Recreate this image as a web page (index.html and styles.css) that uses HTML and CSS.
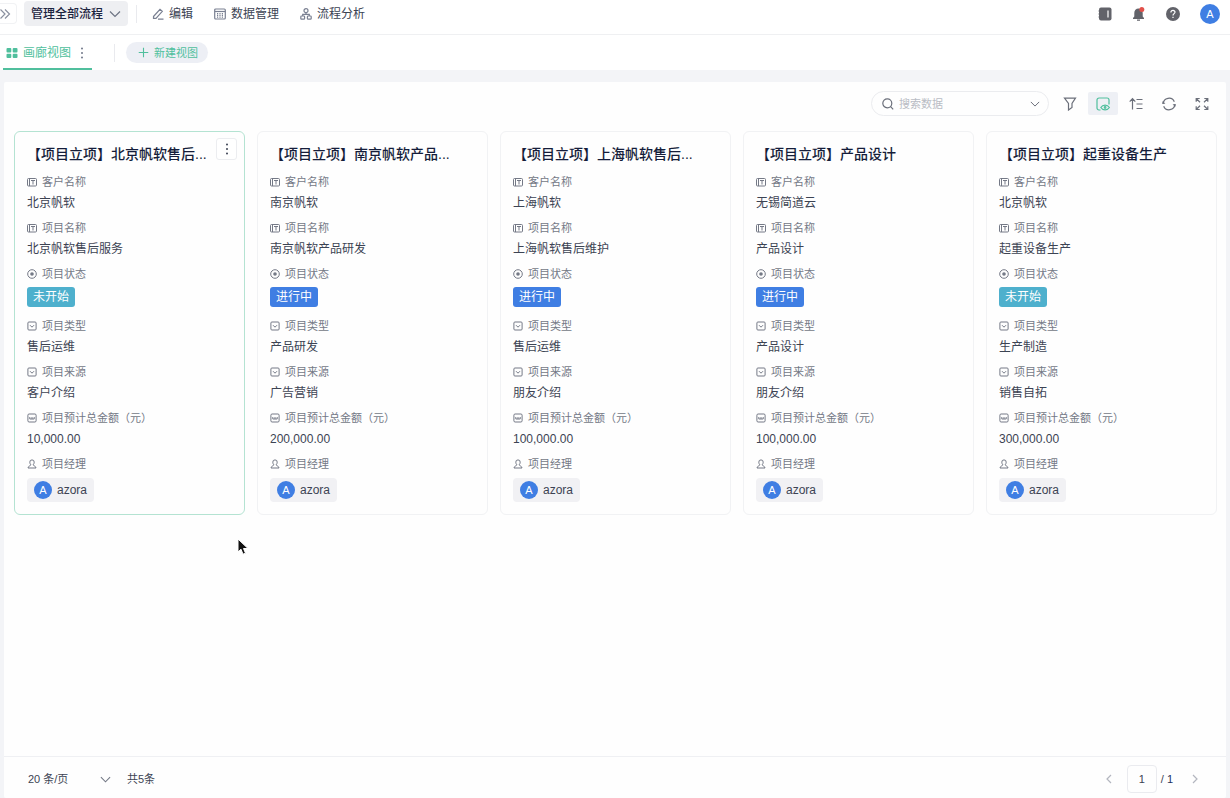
FILE: index.html
```html
<!DOCTYPE html>
<html lang="zh-CN">
<head>
<meta charset="utf-8">
<title>管理全部流程</title>
<link rel="stylesheet" href="styles.css">
</head>
<body>
<svg class="sprite" aria-hidden="true">
  <symbol id="i-text" viewBox="0 0 10 10"><rect x=".5" y="1.500" width="9" height="7.500" rx="1"/><path d="M4 3.500h4M6 3.500v4M2.500 1.500v7.500"/></symbol>
  <symbol id="i-radio" viewBox="0 0 10 10"><circle cx="5" cy="5" r="4.300"/><circle class="solid" cx="5" cy="5" r="1.800"/></symbol>
  <symbol id="i-select" viewBox="0 0 10 10"><rect x=".9" y="1" width="8.200" height="8" rx="1"/><path d="M3 4.200l2 2 2-2"/></symbol>
  <symbol id="i-number" viewBox="0 0 10 10"><rect x=".9" y="1" width="8.200" height="8" rx="1.200"/><path d="M2.800 4v2M5 4v2M7.200 4v2M2.800 6h4.400"/></symbol>
  <symbol id="i-user" viewBox="0 0 10 10"><path d="M5 .9a2.200 2.200 0 0 0-2.200 2.300c0 1.200.5 1.900 1 2.600C3.700 7 1 7 1 9h8c0-2-2.700-2-2.800-3.200.5-.7 1-1.400 1-2.600A2.200 2.200 0 0 0 5 .9z"/></symbol>
  <symbol id="i-down" viewBox="0 0 12 12"><path d="M1 3.500l5 5 5-5"/></symbol>
  <symbol id="i-more" viewBox="0 0 12 12"><circle class="solid" cx="6" cy="1.500" r="1"/><circle class="solid" cx="6" cy="6" r="1"/><circle class="solid" cx="6" cy="10.500" r="1"/></symbol>
</svg>

<header class="topbar">
  <button class="expand" aria-label="展开"><svg class="icon" viewBox="0 0 12 12"><path d="M1.500 1.500L6 6l-4.500 4.500M6 1.500L10.500 6 6 10.500"/></svg></button>
  <button class="scope">管理全部流程<svg class="icon"><use href="#i-down"/></svg></button>
  <span class="rule"></span>
  <nav class="menu">
    <a href="#"><svg class="icon" viewBox="0 0 12 12"><path d="M1.500 8.500L8 1.300l2.300 2L4 10.300H1.500zM6 11.200h5.500"/></svg>编辑</a>
    <a href="#"><svg class="icon" viewBox="0 0 12 12"><rect x=".7" y="1" width="10.600" height="10" rx="1"/><path d="M.7 3.500h10.600"/><path d="M3 5.700h6M3 7.400h6M3 9.100h6" stroke-dasharray="1.200 1.200"/></svg>数据管理</a>
    <a href="#"><svg class="icon" viewBox="0 0 12 12"><circle cx="6" cy="2.700" r="2"/><path d="M6 4.700v1.600M2.700 8V6.300h6.600V8"/><rect x=".8" y="8" width="3.800" height="3.200" rx=".8"/><rect x="7.400" y="8" width="3.800" height="3.200" rx=".8"/></svg>流程分析</a>
  </nav>
  <div class="account">
    <button aria-label="侧栏"><svg class="icon" viewBox="0 0 14 14"><rect class="solid" x="1" y=".5" width="12.500" height="13" rx="2"/><path class="light" d="M10 3.500v7"/><path d="M.5 4H2M.5 7H2M.5 10H2"/></svg></button>
    <button aria-label="通知"><svg class="icon" viewBox="0 0 14 14"><path class="solid" d="M6.500 1.500A4.300 4.300 0 0 0 2.300 6v3.500L1 11v1h11v-1l-1.300-1.500V6a4.300 4.300 0 0 0-4.200-4.500zM5 12.500h3v1.300H5z"/><circle class="alert" cx="9.800" cy="2.500" r="2.500"/></svg></button>
    <button aria-label="帮助"><svg class="icon" viewBox="0 0 14 14"><circle class="solid" cx="7" cy="7" r="7"/><path class="light" d="M4.900 5.400C5 2.700 9.200 2.900 9 5.300 8.900 6.600 7 6.700 7 8.400M7 9.700v1.300"/></svg></button>
    <button class="avatar avatar-large" aria-label="账户">A</button>
  </div>
</header>

<div class="views">
  <button class="view"><svg class="icon" viewBox="0 0 12 12"><g class="solid"><rect x=".5" y="1" width="4.800" height="4.400" rx="1"/><rect x="6.700" y="1" width="4.800" height="4.400" rx="1"/><rect x=".5" y="6.700" width="4.800" height="4.400" rx="1"/><rect x="6.700" y="6.700" width="4.800" height="4.400" rx="1"/></g></svg>画廊视图<svg class="icon dots"><use href="#i-more"/></svg></button>
  <span class="rule"></span>
  <button class="add-view"><svg class="icon" viewBox="0 0 12 12"><path d="M6 .8v10.400M.8 6h10.400"/></svg>新建视图</button>
</div>

<main class="panel">
  <div class="toolbar">
    <label class="search"><svg class="icon" viewBox="0 0 12 12"><circle cx="5.300" cy="5.300" r="4.500"/><path d="M8.600 8.600l2.600 2.800"/></svg><input type="text" placeholder="搜索数据" aria-label="搜索数据"><svg class="icon chevron" viewBox="0 0 12 12"><use href="#i-down"/></svg></label>
    <button aria-label="筛选"><svg class="icon" viewBox="0 0 14 14"><path d="M1.500 1.200h11L9 6.500v4L5.500 13V6.500z"/></svg></button>
    <button class="on" aria-label="显示字段"><svg class="icon" viewBox="0 0 14 14"><path d="M4.500 13H3a2 2 0 0 1-2-2V3a2 2 0 0 1 2-2h8a2 2 0 0 1 2 2v4.500"/><path d="M4.800 10.500c2-3.200 6.600-3.200 8.600 0-2 3.200-6.600 3.200-8.600 0z"/><circle cx="9.100" cy="10.500" r=".8"/></svg></button>
    <button aria-label="排序"><svg class="icon" viewBox="0 0 14 14"><path d="M3.500 12.500V2M.7 4.700l2.800-3 2.800 3M7.500 2.500h6M7.500 7h6M7.500 11.500h6"/></svg></button>
    <button aria-label="刷新"><svg class="icon" viewBox="0 0 14 14"><path d="M1.300 6.800A5.700 5.700 0 0 1 12.300 4.800M12.700 7.200A5.700 5.700 0 0 1 1.700 9.200"/><path class="solid" d="M10.600 7.200h3.400L13.200 10zM0 6.800h3.400L.8 4z"/></svg></button>
    <button aria-label="全屏"><svg class="icon" viewBox="0 0 14 14"><path d="M1.200 4.800V1.500h3.500M1.200 1.500L5 5.200M9.300 1.500h3.500v3.300M12.800 1.500L9 5.200M1.200 9.200v3.300h3.500M1.200 12.500L5 8.800M9.300 12.500h3.500V9.200M12.800 12.500L9 8.800"/></svg></button>
  </div>

  <section class="gallery">
    <article class="card active">
      <button class="card-more" aria-label="更多"><svg class="icon"><use href="#i-more"/></svg></button>
      <h2>【项目立项】北京帆软售后...</h2>
      <dl>
        <dt><svg class="icon"><use href="#i-text"/></svg>客户名称</dt><dd>北京帆软</dd>
        <dt><svg class="icon"><use href="#i-text"/></svg>项目名称</dt><dd>北京帆软售后服务</dd>
        <dt><svg class="icon"><use href="#i-radio"/></svg>项目状态</dt><dd class="status"><span class="tag idle">未开始</span></dd>
        <dt><svg class="icon"><use href="#i-select"/></svg>项目类型</dt><dd>售后运维</dd>
        <dt><svg class="icon"><use href="#i-select"/></svg>项目来源</dt><dd>客户介绍</dd>
        <dt><svg class="icon"><use href="#i-number"/></svg>项目预计总金额（元）</dt><dd>10,000.00</dd>
        <dt><svg class="icon"><use href="#i-user"/></svg>项目经理</dt><dd class="member"><span class="chip"><span class="avatar">A</span>azora</span></dd>
      </dl>
    </article>
    <article class="card">
      <h2>【项目立项】南京帆软产品...</h2>
      <dl>
        <dt><svg class="icon"><use href="#i-text"/></svg>客户名称</dt><dd>南京帆软</dd>
        <dt><svg class="icon"><use href="#i-text"/></svg>项目名称</dt><dd>南京帆软产品研发</dd>
        <dt><svg class="icon"><use href="#i-radio"/></svg>项目状态</dt><dd class="status"><span class="tag">进行中</span></dd>
        <dt><svg class="icon"><use href="#i-select"/></svg>项目类型</dt><dd>产品研发</dd>
        <dt><svg class="icon"><use href="#i-select"/></svg>项目来源</dt><dd>广告营销</dd>
        <dt><svg class="icon"><use href="#i-number"/></svg>项目预计总金额（元）</dt><dd>200,000.00</dd>
        <dt><svg class="icon"><use href="#i-user"/></svg>项目经理</dt><dd class="member"><span class="chip"><span class="avatar">A</span>azora</span></dd>
      </dl>
    </article>
    <article class="card">
      <h2>【项目立项】上海帆软售后...</h2>
      <dl>
        <dt><svg class="icon"><use href="#i-text"/></svg>客户名称</dt><dd>上海帆软</dd>
        <dt><svg class="icon"><use href="#i-text"/></svg>项目名称</dt><dd>上海帆软售后维护</dd>
        <dt><svg class="icon"><use href="#i-radio"/></svg>项目状态</dt><dd class="status"><span class="tag">进行中</span></dd>
        <dt><svg class="icon"><use href="#i-select"/></svg>项目类型</dt><dd>售后运维</dd>
        <dt><svg class="icon"><use href="#i-select"/></svg>项目来源</dt><dd>朋友介绍</dd>
        <dt><svg class="icon"><use href="#i-number"/></svg>项目预计总金额（元）</dt><dd>100,000.00</dd>
        <dt><svg class="icon"><use href="#i-user"/></svg>项目经理</dt><dd class="member"><span class="chip"><span class="avatar">A</span>azora</span></dd>
      </dl>
    </article>
    <article class="card">
      <h2>【项目立项】产品设计</h2>
      <dl>
        <dt><svg class="icon"><use href="#i-text"/></svg>客户名称</dt><dd>无锡简道云</dd>
        <dt><svg class="icon"><use href="#i-text"/></svg>项目名称</dt><dd>产品设计</dd>
        <dt><svg class="icon"><use href="#i-radio"/></svg>项目状态</dt><dd class="status"><span class="tag">进行中</span></dd>
        <dt><svg class="icon"><use href="#i-select"/></svg>项目类型</dt><dd>产品设计</dd>
        <dt><svg class="icon"><use href="#i-select"/></svg>项目来源</dt><dd>朋友介绍</dd>
        <dt><svg class="icon"><use href="#i-number"/></svg>项目预计总金额（元）</dt><dd>100,000.00</dd>
        <dt><svg class="icon"><use href="#i-user"/></svg>项目经理</dt><dd class="member"><span class="chip"><span class="avatar">A</span>azora</span></dd>
      </dl>
    </article>
    <article class="card">
      <h2>【项目立项】起重设备生产</h2>
      <dl>
        <dt><svg class="icon"><use href="#i-text"/></svg>客户名称</dt><dd>北京帆软</dd>
        <dt><svg class="icon"><use href="#i-text"/></svg>项目名称</dt><dd>起重设备生产</dd>
        <dt><svg class="icon"><use href="#i-radio"/></svg>项目状态</dt><dd class="status"><span class="tag idle">未开始</span></dd>
        <dt><svg class="icon"><use href="#i-select"/></svg>项目类型</dt><dd>生产制造</dd>
        <dt><svg class="icon"><use href="#i-select"/></svg>项目来源</dt><dd>销售自拓</dd>
        <dt><svg class="icon"><use href="#i-number"/></svg>项目预计总金额（元）</dt><dd>300,000.00</dd>
        <dt><svg class="icon"><use href="#i-user"/></svg>项目经理</dt><dd class="member"><span class="chip"><span class="avatar">A</span>azora</span></dd>
      </dl>
    </article>
  </section>

  <footer class="pager">
    <label class="page-size"><select aria-label="每页条数"><option>20 条/页</option></select><svg class="icon" viewBox="0 0 12 12"><use href="#i-down"/></svg></label>
    <span>共5条</span>
    <div class="pages">
      <button aria-label="上一页"><svg class="icon" viewBox="0 0 10 10"><path d="M7 1L3 5l4 4"/></svg></button>
      <input type="text" value="1" aria-label="页码">
      <span class="total">/ <b>1</b></span>
      <button aria-label="下一页"><svg class="icon" viewBox="0 0 10 10"><path d="M3 1l4 4-4 4"/></svg></button>
    </div>
  </footer>
</main>

<svg class="cursor" viewBox="0 0 12 18" aria-hidden="true"><path d="M1 1v13l3-2.800 2 5 2.500-1-2-4.700H11z"/></svg>
</body>
</html>
```

FILE: styles.css
```css
* { box-sizing: border-box; }

body {
  margin: 0;
  min-height: 100vh;
  display: flex;
  flex-direction: column;
  background: #f3f4f7;
  color: #3c4353;
  font: 12px/20px "Liberation Sans", "Noto Sans CJK SC", sans-serif;
}

button, input, select {
  margin: 0;
  padding: 0;
  border: 0;
  background: none;
  color: inherit;
  font: inherit;
}

button { display: flex; align-items: center; justify-content: center; }
a { color: inherit; text-decoration: none; }
.sprite { display: none; }

.icon {
  flex: none;
  width: 12px;
  height: 12px;
  fill: none;
  stroke: currentColor;
  stroke-width: 1.2;
}
.solid { fill: currentColor; stroke: none; }
.light { stroke: #fff; }
.alert { fill: #e2504a; stroke: none; }
.rule { width: 1px; height: 18px; background: #e9eaee; }

/* top bar */
.topbar {
  display: flex;
  align-items: center;
  height: 35px;
  padding: 0 10px 7px 0;
  background: #fff;
  border-bottom: 1px solid #eff0f2;
}
.expand {
  width: 17px;
  height: 21px;
  padding-right: 6px;
  border: 1px solid #f1f2f4;
  border-left: 0;
  border-radius: 0 4px 4px 0;
  color: #8b91a0;
}
.scope {
  gap: 6px;
  height: 25px;
  margin: 0 8px 0 7px;
  padding: 0 7px;
  border-radius: 4px;
  background: #eeeff2;
  color: #1c2440;
  font-weight: 500;
}
.scope .icon { color: #6d7484; }
.menu { display: flex; gap: 21px; margin-left: 15px; }
.menu a { display: flex; align-items: center; gap: 5px; }
.menu .icon { color: #7a8092; }
.account { display: flex; align-items: center; gap: 20px; margin-left: auto; color: #62636a; }
.account .icon { width: 14px; height: 14px; }

.avatar {
  display: flex;
  align-items: center;
  justify-content: center;
  width: 18px;
  height: 18px;
  border-radius: 50%;
  background: #3f7ee3;
  color: #fff;
  font-size: 11px;
}
.avatar-large { width: 20px; height: 20px; }

/* view tabs */
.views {
  display: flex;
  align-items: center;
  height: 35px;
  padding-left: 3px;
  background: #fff;
  color: #50bf9d;
}
.view { gap: 5px; height: 35px; padding: 2px 4px 0 3px; border-bottom: 2px solid #50bf9d; }
.view .dots { color: #707789; }
.views .rule { margin: 0 11px 0 22px; }
.add-view {
  gap: 5px;
  height: 21px;
  padding: 0 10px 0 12px;
  border-radius: 11px;
  background: #edeff5;
  font-size: 11px;
}
.add-view .icon { width: 11px; height: 11px; }

/* gallery panel */
.panel {
  flex: 1;
  display: flex;
  flex-direction: column;
  margin: 12px 4px 0;
  border-radius: 2px;
  background: #fefefe;
}
.toolbar {
  display: flex;
  align-items: center;
  justify-content: flex-end;
  gap: 3px;
  height: 43px;
  padding: 0 9px 0 0;
  color: #6b6f7a;
}
.toolbar button { width: 30px; height: 23px; border-radius: 2px; }
.toolbar button .icon { width: 14px; height: 14px; }
.toolbar .on { background: #eef0f5; color: #50bf9d; }
.search {
  display: flex;
  align-items: center;
  gap: 5px;
  width: 178px;
  height: 25px;
  margin-right: 3px;
  padding: 0 8px 0 10px;
  border: 1px solid #ebecef;
  border-radius: 13px;
}
.search input { flex: 1; min-width: 0; outline: 0; font-size: 11px; }
.search input::placeholder { color: #b9bcc4; opacity: 1; }
.search .chevron { width: 10px; height: 10px; }

.gallery {
  display: grid;
  grid-template-columns: repeat(5, 1fr);
  gap: 12px;
  padding: 6px 9px 12px 10px;
}
.card {
  position: relative;
  min-width: 0;
  padding: 11px 12px 9px;
  border: 1px solid #f1f2f4;
  border-radius: 6px;
}
.card.active { border-color: #b4e3d2; }
.card h2 {
  margin: 0 0 9px;
  overflow: hidden;
  color: #151d3a;
  font-size: 14px;
  font-weight: 500;
  line-height: 22px;
  white-space: nowrap;
}
.card-more {
  position: absolute;
  top: 6px;
  right: 7px;
  width: 21px;
  height: 22px;
  border: 1px solid #ecedf0;
  border-radius: 3px;
  background: #fff;
}
.card dl { margin: 0; }
.card dt {
  display: flex;
  align-items: center;
  gap: 5px;
  height: 16px;
  margin-bottom: 3px;
  color: #747986;
  font-size: 11px;
}
.card dt .icon { width: 10px; height: 10px; stroke-width: 1; }
.card dd { display: flex; align-items: center; height: 20px; margin: 0 0 7px; }
.card .status { height: 26px; padding-bottom: 2px; }
.card .member { height: 30px; margin-bottom: 0; }
.tag {
  height: 20px;
  padding: 0 6px;
  border-radius: 3px;
  background: #3f7ee3;
  color: #fff;
}
.tag.idle { background: #4eb0cd; }
.chip {
  display: flex;
  align-items: center;
  gap: 5px;
  height: 24px;
  padding: 0 7px;
  border-radius: 4px;
  background: #f1f1f4;
}

/* pagination */
.pager {
  display: flex;
  align-items: center;
  gap: 16px;
  height: 42px;
  margin-top: auto;
  padding: 3px 24px 0 24px;
  border-top: 1px solid #eff0f3;
  font-size: 11px;
}
.page-size { display: flex; align-items: center; }
.page-size select { width: 72px; appearance: none; outline: 0; }
.page-size .icon { width: 11px; height: 11px; color: #747986; }
.pages { display: flex; align-items: center; margin-left: auto; }
.pages button { width: 14px; height: 20px; color: #b3b6bf; }
.pages .icon { width: 10px; height: 10px; }
.pages input {
  width: 30px;
  height: 28px;
  margin: 0 4px 0 11px;
  border: 1px solid #eaebef;
  border-radius: 4px;
  text-align: center;
}
.total { margin-right: 15px; }
.total b { color: #22305e; font-weight: 400; }

.cursor {
  position: absolute;
  top: 538px;
  left: 237px;
  width: 12px;
  height: 18px;
  fill: #111;
  stroke: #fff;
  stroke-width: 1;
}
```
